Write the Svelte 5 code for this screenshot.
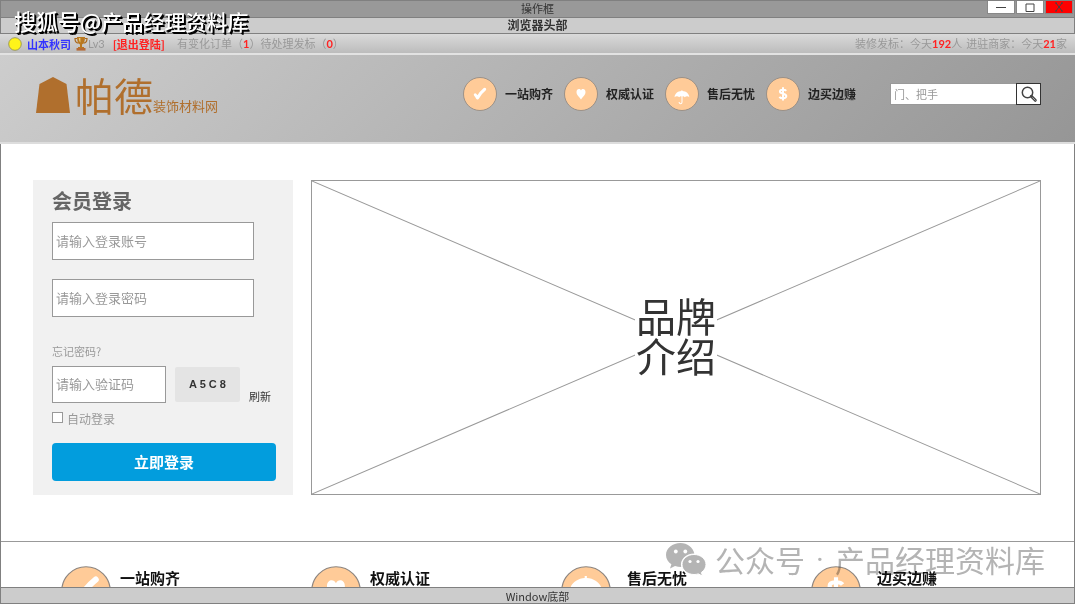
<script>
  const services = [
    { label: '一站购齐', icon: 'check' },
    { label: '权威认证', icon: 'heart' },
    { label: '售后无忧', icon: 'umbrella' },
    { label: '边买边赚', icon: 'dollar' }
  ];
  const largeGlyph = {
    check: 'translate(-6.800 -8) scale(1.400)',
    heart: 'translate(-6 -6.500) scale(1.350)',
    umbrella: 'translate(-8.500 -13) scale(1.500)',
    dollar: 'translate(-6.800 -6.800) scale(1.400)'
  };
</script>

{#snippet badge(icon, large)}
  <svg class="badge" viewBox="0 0 34 34" aria-hidden="true">
    <circle cx="17" cy="17" r="16.5" fill="#ffcb98" stroke="#8c8580" stroke-width="0.8" />
    <g transform={large ? largeGlyph[icon] : undefined}>
      {#if icon === 'check'}
        <path d="M12.300 17.800c1 .8 1.500 2 2.200 3.200 1.700-3.300 4.300-6.400 7.200-8.700" fill="none" stroke="#fff" stroke-width="3" stroke-linecap="round" stroke-linejoin="round" />
      {:else if icon === 'heart'}
        <path d="M17 22.500c-1.300-2.300-4.500-4.200-4.500-7.500 0-3.400 3.500-3.900 4.500-1.500 1-2.400 4.500-1.900 4.500 1.500 0 3.300-3.200 5.200-4.500 7.500z" fill="#fff" />
      {:else if icon === 'umbrella'}
        <path d="M9.600 20.300c.2-3.800 3.200-5.900 6.800-6.200v-.9h1v.9c3.700.3 6.700 2.400 6.900 6.200-1-1.300-3.400-1.300-4.500 0-.8-.9-1.600-1.100-2.300-.8v5.400c0 3-3.900 2.900-3.900.2h1c0 1.500 1.900 1.500 1.900-.2v-5.400c-.7-.3-1.600-.1-2.300.8-1.100-1.300-3.600-1.300-4.600 0z" fill="#fff" />
      {:else}
        <path d="M20.200 13.800c-1-1.300-6.300-1.700-6.300.8 0 2.900 6.400 1.300 6.400 4.500 0 3-5.600 2.700-6.900.8M17 10.300v13.200" fill="none" stroke="#fff" stroke-width="2" />
      {/if}
    </g>
  </svg>
{/snippet}

<div class="window">
  <div class="bar chrome">
    <span>操作框</span>
    <div class="controls">
      <button aria-label="最小化"><svg viewBox="0 0 12 12"><path d="M1 6.500h10" /></svg></button>
      <button aria-label="最大化"><svg viewBox="0 0 12 12"><path d="M2 3h8v7.500h-8z" /></svg></button>
      <button class="close" aria-label="关闭"><svg viewBox="0 0 12 12"><path d="M3 2l6 8M9 2l-6 8M2 2h2M8 2h2M2 10h2M8 10h2" /></svg></button>
    </div>
  </div>
  <div class="bar browser">浏览器头部</div>

  <div class="userbar">
    <svg class="avatar" viewBox="0 0 14 14"><circle cx="7" cy="7" r="6.300" fill="#fff31a" stroke="#8f8c50" stroke-width="0.8" /></svg>
    <a class="name" href="#user">山本秋司</a>
    <svg class="trophy" viewBox="0 0 14 15">
      <path d="M3 2.500H1c0 3 1.500 4.500 3.500 4.700M11 2.500h2c0 3-1.500 4.500-3.500 4.700" fill="none" stroke="#a9681c" stroke-width="1.200" />
      <path d="M3 1h8c0 4-1 6.500-3 7.500v2.500h2v1.500H4V11h2V8.500C4 7.500 3 5 3 1z" fill="#b97820" />
      <path d="M4.800 2h1.600v4.500C5.300 5.500 5 4 4.800 2z" fill="#eccf78" />
      <path d="M2.500 12h9v2.600h-9z" fill="#b66a35" />
    </svg>
    <span class="level">Lv3</span>
    <a class="logout" href="#logout">[退出登陆]</a>
    <span>有变化订单（<b>1</b>）</span>
    <span>待处理发标（<b>0</b>）</span>
    <span class="stats">装修发标：今天<b>192</b>人</span>
    <span class="joined">进驻商家：今天<b>21</b>家</span>
  </div>

  <header>
    <a class="logo" href="#home">
      <svg viewBox="0 0 34 36"><path d="M17 0L30.500 7 34 36H0L3.500 7z" fill="#b06f2d" /></svg>
      <strong>帕德</strong><small>装饰材料网</small>
    </a>
    <ul class="promises">
      {#each services as item}
        <li>{@render badge(item.icon, false)}<span>{item.label}</span></li>
      {/each}
    </ul>
    <form class="search" role="search">
      <input type="text" placeholder="门、把手" aria-label="搜索商品" />
      <button type="button" aria-label="搜索">
        <svg viewBox="0 0 18 18">
          <circle cx="7.500" cy="7.500" r="5.200" fill="none" stroke="#444" stroke-width="1.500" />
          <path d="M11.300 11.300l4 4" stroke="#444" stroke-width="3" stroke-linecap="round" />
          <path d="M12.700 12.700l2.600 2.600" stroke="#aaa" stroke-width="1" stroke-linecap="round" />
        </svg>
      </button>
    </form>
  </header>

  <div class="page">
    <main>
      <form class="login">
        <h1>会员登录</h1>
        <input class="field" type="text" placeholder="请输入登录账号" aria-label="登录账号" />
        <input class="field" type="password" placeholder="请输入登录密码" aria-label="登录密码" />
        <a class="forgot" href="#forgot">忘记密码?</a>
        <div class="captcha">
          <input type="text" placeholder="请输入验证码" aria-label="验证码" />
          <span class="code">A 5 C 8</span>
          <button type="button">刷新</button>
        </div>
        <label class="auto"><input type="checkbox" />自动登录</label>
        <button class="submit" type="button">立即登录</button>
      </form>
      <section class="brand">
        <svg viewBox="0 0 100 100" preserveAspectRatio="none" aria-hidden="true">
          <path d="M0 0L100 100M100 0L0 100" vector-effect="non-scaling-stroke" />
        </svg>
        <h2>品牌<br />介绍</h2>
      </section>
    </main>
    <ul class="features">
      {#each services as item, i}
        <li class:wide={i > 1}>{@render badge(item.icon, true)}<span>{item.label}</span></li>
      {/each}
    </ul>
  </div>

  <footer class="bar">Window底部</footer>

  <div class="mark-top"><span>搜狐号@</span>产品经理资料库</div>
  <div class="mark-bottom">
    <svg viewBox="0 0 40 33" aria-hidden="true">
      <path d="M14.500 0C6.500 0 0 5.200 0 12c0 3.900 2.100 7.100 5.400 9.300L4 25.500l5-2.500c2 .6 4 .9 6.200.9C13.500 16.500 20 10.500 28.300 10.500 27 4.500 21.300 0 14.500 0z" />
      <path d="M28 11.500c-6.700 0-12 4.500-12 10s5.300 10 12 10c1.600 0 3-.2 4.300-.6l4.200 2.100-1.100-3.600C38.300 27.500 40 24.700 40 21.500c0-5.500-5.300-10-12-10z" />
      <g class="eyes"><circle cx="9.800" cy="8.500" r="1.900" /><circle cx="19.300" cy="8.500" r="1.900" /><circle cx="24" cy="18.500" r="1.600" /><circle cx="32" cy="18.500" r="1.600" /></g>
    </svg>
    <span>公众号</span><span class="dot">·</span><span>产品经理资料库</span>
  </div>
</div>

<style>
  :global(body) { margin: 0; background: #fff; }
  * { box-sizing: border-box; }
  .window {
    position: relative;
    display: flex;
    flex-direction: column;
    height: 100vh;
    margin-right: 5px;
    overflow: hidden;
    font-family: "Noto Sans CJK SC", sans-serif;
    font-size: 11px;
    color: #333;
  }
  ul { list-style: none; margin: 0; padding: 0; }
  a { color: inherit; text-decoration: none; }
  input, button { font-family: inherit; margin: 0; border-radius: 0; }
  button { padding: 0; }
  input { color: #333; outline: none; }
  input::placeholder { color: #999; opacity: 1; }
  svg { display: block; flex: none; }

  .bar {
    display: flex;
    flex: none;
    align-items: center;
    justify-content: center;
    height: 16px;
    line-height: 14px;
    background: #ccc;
    border: 1px solid #808080;
    border-width: 0 1px 1px;
  }
  .chrome { position: relative; height: 18px; padding-bottom: 2px; background: #999; border-top-width: 1px; }
  .browser { padding-bottom: 2px; font-size: 12px; font-weight: 700; }
  .controls { position: absolute; top: 0; right: 1px; display: flex; gap: 1px; }
  .controls button {
    display: flex;
    align-items: center;
    justify-content: center;
    width: 28px;
    height: 13px;
    background: #fff;
    border: 1px solid #888;
    border-top: 0;
  }
  .controls .close { background: #f00; }
  .controls svg { width: 12px; height: 12px; fill: none; stroke: #444; }

  .userbar {
    display: flex;
    flex: none;
    align-items: center;
    height: 21px;
    padding: 0 8px;
    line-height: 18px;
    color: #999;
    background: linear-gradient(#dadada, #bcbcbc);
    border-bottom: 2px solid #e2e2e2;
  }
  .userbar b { color: #f22; font-family: Lato, sans-serif; font-weight: 700; }
  .avatar { width: 14px; height: 14px; margin-right: 5px; }
  .name { color: #33f; font-weight: 700; }
  .trophy { width: 14px; height: 15px; margin-left: 3px; }
  .level { margin-right: 8px; font-family: Lato, sans-serif; }
  .logout { margin-right: 12px; color: #f22; font-weight: 700; }
  .stats { margin-left: auto; }
  .joined { margin-left: 4px; }

  header {
    display: flex;
    flex: none;
    align-items: flex-start;
    height: 89px;
    padding: 22px 34px 0 36px;
    background: linear-gradient(135deg, #cdcdcd, #969696);
    border-bottom: 2px solid #ddd;
  }
  .logo { display: flex; align-items: baseline; color: #b06f2d; line-height: 34px; }
  .logo svg { width: 34px; height: 36px; margin-right: 5px; align-self: flex-start; }
  .logo strong { font-size: 39px; font-weight: 400; }
  .logo small { font-size: 13px; font-weight: 400; }
  .promises { display: flex; gap: 11px; margin-left: auto; }
  .promises li { display: flex; align-items: center; gap: 8px; color: #222; font-size: 12px; line-height: 16px; font-weight: 700; }
  .promises :global(.badge) { width: 34px; height: 34px; }
  .search { display: flex; height: 22px; margin: 6px 0 0 34px; }
  .search input { width: 126px; padding: 0 3px; font-size: 11px; background: #fff; border: 1px solid #999; border-right: 0; }
  .search button { display: flex; align-items: center; justify-content: center; width: 25px; background: #fff; border: 1px solid #333; }
  .search svg { width: 18px; height: 18px; }

  .page { flex: 1; min-height: 0; overflow: hidden; border: 1px solid #808080; border-width: 0 1px; background: #fff; }
  main { display: flex; gap: 18px; padding: 36px 33px 46px 32px; }
  .login { display: flex; flex-direction: column; align-items: flex-start; flex: none; width: 260px; padding: 6px 17px 14px 19px; background: #f1f1f1; }
  h1 { margin: 0 0 6px; font-size: 20px; line-height: 30px; font-weight: 700; color: #666; }
  .field, .captcha input { height: 38px; padding: 0 3px 2px; font-size: 13px; background: #fff; border: 1px solid #999; }
  .field { width: 202px; margin-bottom: 19px; }
  .forgot { margin-top: 7px; line-height: 16px; color: #999; }
  .captcha { display: flex; margin-top: 7px; }
  .captcha input { width: 114px; height: 37px; }
  .code { width: 65px; height: 35px; margin: 1px 9px 0; background: #e4e4e4; border-radius: 2px; font: 700 11px/35px "Liberation Sans", sans-serif; text-align: center; }
  .captcha button { align-self: flex-end; border: 0; background: none; font-size: 11px; line-height: 14px; color: #333; }
  .auto { display: flex; align-items: center; gap: 4px; margin-top: 7px; font-size: 12px; line-height: 18px; color: #999; }
  .auto input { appearance: none; width: 11px; height: 11px; background: #fff; border: 1px solid #999; margin-bottom: 3px; }
  .submit { align-self: stretch; height: 38px; margin-top: 15px; padding-bottom: 2px; border: 0; border-radius: 4px; background: #029ddd; color: #fff; font-size: 15px; font-weight: 700; }

  .brand { position: relative; display: grid; flex: 1; place-items: center; border: 1px solid #999; }
  .brand svg { position: absolute; inset: 0; width: 100%; height: 100%; }
  .brand path { fill: none; stroke: #999; stroke-width: 1; }
  h2 { position: relative; margin: 0; padding: 0 1px 6px; font-size: 40px; line-height: 40px; font-weight: 400; background: #fff; }

  .features { display: grid; grid-template-columns: repeat(4, 250px); padding: 24px 0 0 60px; border-top: 1px solid #999; }
  .features li { display: flex; gap: 9px; color: #111; font-size: 15px; line-height: 24px; font-weight: 700; }
  .features .wide { gap: 16px; }
  .features :global(.badge) { width: 50px; height: 50px; }
  footer.bar { height: 17px; border-top-width: 1px; }

  .mark-top { position: absolute; top: 6px; left: 14px; font-size: 21px; line-height: 28px; font-weight: 500; color: #fff; text-shadow: 1px 1px #000, 2px 2px #000; white-space: nowrap; }
  .mark-top span { font-size: 22px; }
  .mark-bottom { position: absolute; right: 30px; bottom: 24px; display: flex; align-items: center; height: 42px; font-size: 30px; color: #b4b4b4; mix-blend-mode: multiply; pointer-events: none; white-space: nowrap; }
  .mark-bottom svg { width: 40px; height: 33px; margin-right: 9px; fill: #b4b4b4; }
  .mark-bottom .eyes { fill: #fff; }
  .mark-bottom path + path { stroke: #fff; stroke-width: 1; }
  .dot { width: 30px; font-family: Roboto, sans-serif; text-align: center; }
</style>
